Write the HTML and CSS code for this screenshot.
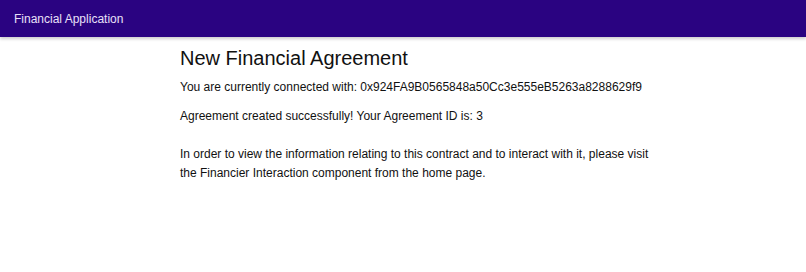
FILE: index.html
```html
<!DOCTYPE html>
<html lang="en">
<head>
    <meta charset="UTF-8">
    <meta name="viewport" content="width=device-width, initial-scale=1.0">
    <title>Financial Application</title>
    <link rel="stylesheet" href="styles.css">
</head>
<body>
    <div class="navbar">
        <span>Financial Application</span>
    </div>

    <!-- new agreement -->
    <div class="agreement-container">
        <h1 class="agreement-title">New Financial Agreement</h1>
        <p class="connected">You are currently connected with: 0x924FA9B0565848a50Cc3e555eB5263a8288629f9</p>
        <p class="success">Agreement created successfully! Your Agreement ID is: 3</p>
        <p class="info">In order to view the information relating to this contract and to interact with it, please visit the Financier Interaction component from the home page.</p>
    </div>
</body>
</html>
```

FILE: styles.css
```css
* {
    margin: 0;
    padding: 0;
    box-sizing: border-box;
}

body {
    font-family: 'Liberation Sans', Arial, sans-serif;
    background: #fff;
    color: #111;
}

.navbar {
    background: #2a0381;
    color: #e8e0f8;
    height: 37px;
    padding: 0 14px;
    display: flex;
    align-items: center;
    font-size: 12px;
    box-shadow: 0 2px 3px rgba(0,0,0,0.2);
}

.agreement-container {
    width: 480px;
    margin-left: 180px;
    padding-top: 9px;
}

.agreement-title {
    font-size: 20px;
    font-weight: normal;
    line-height: 24px;
    margin-bottom: 8px;
}

.connected,
.success,
.info {
    font-size: 12px;
    line-height: 19px;
}

.connected {
    margin-bottom: 10px;
}

.success {
    margin-bottom: 19px;
}
```
